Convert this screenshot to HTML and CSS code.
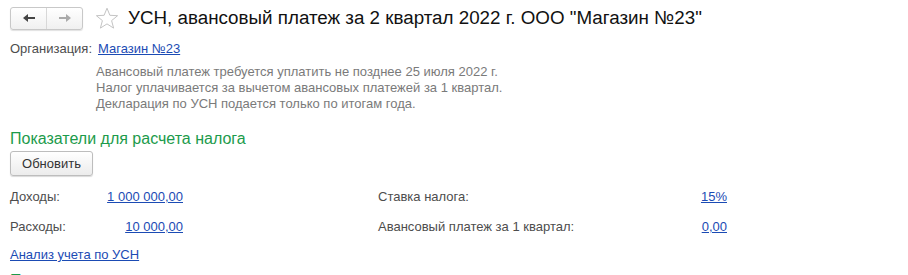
FILE: index.html
```html
<!DOCTYPE html>
<html lang="ru">
<head>
<meta charset="utf-8">
<link rel="stylesheet" href="styles.css">
</head>
<body>
<div class="page">
  <div class="header">
    <div class="nav">
      <span class="nav-btn"><svg width="14" height="10" viewBox="0 0 14 10"><path d="M1 5 L6 1 V4 H13 V6 H6 V9 Z" fill="#444"/></svg></span>
      <span class="nav-btn"><svg width="14" height="10" viewBox="0 0 14 10"><path d="M13 5 L8 1 V4 H1 V6 H8 V9 Z" fill="#aaa"/></svg></span>
    </div>
    <svg class="star" width="24" height="23" viewBox="0 0 24 23"><path d="M12 1.2 L14.9 8.3 L22.6 8.7 L16.6 13.6 L18.6 21.1 L12 16.9 L5.4 21.1 L7.4 13.6 L1.4 8.7 L9.1 8.3 Z" fill="none" stroke="#c4c4c4" stroke-width="1"/></svg>
    <h1 class="title">УСН, авансовый платеж за 2 квартал 2022 г. ООО "Магазин №23"</h1>
  </div>

  <div class="org-row">
    <span class="label org-label">Организация:</span>
    <a class="link" href="#">Магазин №23</a>
  </div>

  <div class="notes">
    <div>Авансовый платеж требуется уплатить не позднее 25 июля 2022 г.</div>
    <div>Налог уплачивается за вычетом авансовых платежей за 1 квартал.</div>
    <div>Декларация по УСН подается только по итогам года.</div>
  </div>

  <div class="section-title">Показатели для расчета налога</div>
  <button class="btn">Обновить</button>

  <div class="indicators">
    <div class="ind-group left">
      <span class="label">Доходы:</span><a class="link value" href="#">1 000 000,00</a>
      <span class="label">Расходы:</span><a class="link value" href="#">10 000,00</a>
    </div>
    <div class="ind-group right">
      <span class="label">Ставка налога:</span><a class="link value" href="#">15%</a>
      <span class="label">Авансовый платеж за 1 квартал:</span><a class="link value" href="#">0,00</a>
    </div>
  </div>

  <a class="link analysis" href="#">Анализ учета по УСН</a>
  <div class="section-title next">Платежи</div>
</div>
</body>
</html>
```

FILE: styles.css
```css
html, body {
  margin: 0;
  padding: 0;
  background: #fff;
}
body {
  font-family: "Liberation Sans", Arial, sans-serif;
  font-size: 13px;
  color: #4d4d4d;
  overflow: hidden;
}
.page {
  padding: 0 10px;
}
.header {
  display: flex;
  align-items: center;
  height: 36px;
}
.nav {
  display: flex;
  width: 73px;
  height: 23px;
  box-sizing: border-box;
  border: 1px solid #c8c8c8;
  border-radius: 3px;
  background: linear-gradient(#ffffff, #f0f0f0);
  box-shadow: 0 1px 1px rgba(0,0,0,0.12);
}
.nav-btn {
  flex: 1;
  display: flex;
  align-items: center;
  justify-content: center;
}
.nav-btn + .nav-btn {
  border-left: 1px solid #d8d8d8;
}
.star {
  margin-left: 12px;
  margin-right: 9px;
}
.title {
  margin: 0;
  font-size: 18.8px;
  font-weight: normal;
  color: #111;
  white-space: nowrap;
}
.org-row {
  display: flex;
  align-items: center;
  height: 24px;
}
.org-label {
  width: 88px;
}
.link {
  color: #1b4bb4;
  text-decoration: underline;
}
.notes {
  margin-left: 86px;
  color: #7a7a7a;
  line-height: 16px;
  padding-top: 4px;
}
.section-title {
  color: #1c9b4b;
  font-size: 16px;
  margin-top: 17px;
  height: 20px;
  line-height: 20px;
}
.btn {
  display: block;
  width: 83px;
  height: 25px;
  margin-top: 2px;
  padding: 0;
  font-family: inherit;
  font-size: 13px;
  color: #333;
  background: linear-gradient(#ffffff, #ececec);
  border: 1px solid #bdbdbd;
  border-radius: 3px;
  box-shadow: 0 1px 1px rgba(0,0,0,0.15);
}
.indicators {
  display: flex;
  margin-top: 5px;
}
.ind-group {
  display: grid;
  grid-auto-rows: 30px;
  align-items: center;
}
.ind-group.left {
  grid-template-columns: 95px 78px;
}
.ind-group.right {
  margin-left: 195px;
  grid-template-columns: 200px 149px;
}
.value {
  text-align: right;
  justify-self: end;
}
.analysis {
  display: inline-block;
  margin-top: 6px;
  line-height: 16px;
}
.section-title.next {
  margin-top: 8px;
}
```
